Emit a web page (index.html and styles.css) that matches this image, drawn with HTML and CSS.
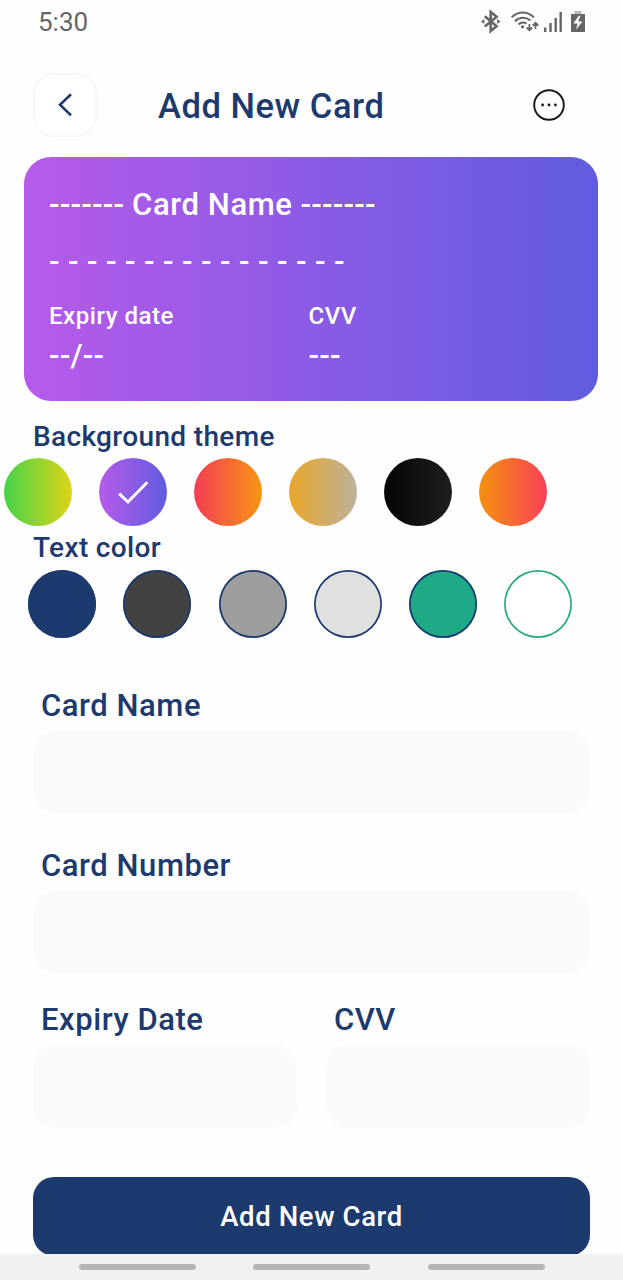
FILE: index.html
```html
<!DOCTYPE html>
<html lang="en">
<head>
<meta charset="utf-8">
<title>Add New Card</title>
<link rel="stylesheet" href="styles.css">
</head>
<body>
<div class="screen">
  <div class="status">
    <span class="clock">5:30</span>
    <svg class="status-icons" width="108" height="26" viewBox="480 9 108 26" fill="none" stroke="#666" stroke-width="2">
      <path d="M484.8 16.2L496.6 26.2L490.7 31V12L496.6 16.8L484.8 26.6" stroke-width="2.6"/>
      <path d="M481 21.5l3.4-2.6v5.2zM500.5 21.5l-3.4-2.6v5.2z" fill="#666" stroke="none"/>
      <path d="M511.6 17.2Q522.5 7.8 534 17.2M514.8 21.2Q522.5 14.7 530.4 20.4M518.5 24.3Q522.5 21.2 526.5 23.6" stroke-width="2.1"/>
      <circle cx="522.6" cy="26.8" r="1.6" fill="#666" stroke="none"/>
      <path d="M529.4 24v6M526.7 27.5l2.7 2.7 2.7-2.7M535.5 29v-6M532.8 25.5l2.7-2.7 2.7 2.7" stroke-width="1.8"/>
      <path d="M545.2 27.5V32M550.5 23V32M555.7 18V32M560.7 12V32" stroke-width="2.4"/>
      <path d="M574.5 11h7v4h-7z" fill="#bbb" stroke="none"/>
      <path d="M571 14h14v18h-14z" fill="#666" stroke="none"/>
      <path d="M578.8 15.8l-5.4 7.6h4l-1.2 6 6.2-8h-4.2l2.2-5.6z" fill="#fff" stroke="none"/>
    </svg>
  </div>

  <header class="header">
    <button class="back" aria-label="Back">
      <svg width="64" height="64" viewBox="0 0 64 64" fill="none" stroke="#1d3a6e" stroke-width="2.6"><path d="M38 21.2L27 31.8L38 42.4"/></svg>
    </button>
    <h1 class="title">Add New Card</h1>
    <svg class="more" width="34" height="34" viewBox="0 0 34 34"><circle cx="17" cy="17" r="14.8" fill="none" stroke="#171717" stroke-width="1.9"/><g fill="#171717"><circle cx="10.6" cy="17" r="1.4"/><circle cx="17" cy="17" r="1.4"/><circle cx="23.4" cy="17" r="1.4"/></g></svg>
  </header>

  <section class="card">
    <div class="card-name">------- <span class="name-text">Card Name</span> -------</div>
    <div class="card-number">- - - - - - - - - - - - - - - -</div>
    <div class="card-row card-labels"><span>Expiry date</span><span>CVV</span></div>
    <div class="card-row card-values"><span>--/--</span><span>---</span></div>
  </section>

  <h2 class="section">Background theme</h2>
  <div class="swatches themes">
    <span class="swatch green"></span>
    <span class="swatch purple"><svg width="68" height="68" viewBox="0 0 68 68" fill="none" stroke="#fff" stroke-width="3"><path d="M20.2 35.6L29 44L48.3 24.2"/></svg></span>
    <span class="swatch red"></span>
    <span class="swatch gold"></span>
    <span class="swatch black"></span>
    <span class="swatch orange"></span>
  </div>
  <h2 class="section">Text color</h2>
  <div class="swatches colors">
    <span class="swatch ring navy"></span>
    <span class="swatch ring charcoal"></span>
    <span class="swatch ring gray"></span>
    <span class="swatch ring silver"></span>
    <span class="swatch ring teal"></span>
    <span class="swatch ring white"></span>
  </div>

  <form class="form">
    <label class="field"><span class="label">Card Name</span><input class="input" type="text"></label>
    <label class="field"><span class="label">Card Number</span><input class="input" type="text"></label>
    <div class="pair">
      <label class="field"><span class="label">Expiry Date</span><input class="input" type="text"></label>
      <label class="field"><span class="label">CVV</span><input class="input" type="text"></label>
    </div>
    <button class="submit" type="button">Add New Card</button>
  </form>

  <nav class="navbar"><span class="pill"></span><span class="pill"></span><span class="pill"></span></nav>
</div>
</body>
</html>
```
FILE: styles.css
```css
* { box-sizing: border-box; }
body { margin: 0; background: #fefefe; font-family: Roboto, "Liberation Sans", sans-serif; font-weight: 500; color: #1d3a6e; }
h1, h2 { margin: 0; font-weight: 500; }
.screen { display: flex; flex-direction: column; width: 623px; height: 1280px; overflow: hidden; }
.status { display: flex; justify-content: space-between; flex: none; height: 73px; padding: 9px 35px 0 38px; }
.clock { font-size: 26px; line-height: 27px; font-weight: 400; color: #666; }
.header { display: flex; align-items: center; flex: none; height: 64px; padding: 0 57.5px 0 33px; }
.back { width: 64px; height: 64px; padding: 0; border: 0; border-radius: 21px; background: #fff; box-shadow: inset 0 0 0 1.6px #f5f5f5; }
.back svg { display: block; }
.title { margin: 1px auto 0 61px; font-size: 34.5px; line-height: 40px; letter-spacing: 0.55px; white-space: nowrap; }
.card { flex: none; height: 244px; margin: 20px 25px 0 24px; padding: 28px 25px 0 25px; border-radius: 27px; background: linear-gradient(90deg, #b75aea, #605ce0); color: #fff; }
.card-name { font-size: 31px; line-height: 40px; letter-spacing: 0.2px; white-space: nowrap; }
.name-text { letter-spacing: 0.6px; }
.card-number { margin-top: 17px; font-size: 31px; line-height: 40px; letter-spacing: 0.38px; white-space: nowrap; }
.card-row { display: grid; grid-template-columns: 259.5px 1fr; }
.card-labels { margin-top: 19px; font-size: 24px; line-height: 30px; letter-spacing: 0.55px; }
.card-values { margin-top: 5px; font-size: 31px; line-height: 40px; letter-spacing: 0.2px; }
.section { flex: none; height: 57px; padding: 19px 0 0 33px; font-size: 28px; line-height: 34px; letter-spacing: 0.35px; }
.swatches { display: flex; flex: none; gap: 27.1px; height: 68px; }
.themes { padding-left: 4px; }
.themes + .section { height: 44px; padding-top: 5px; }
.colors { gap: 27.3px; padding-left: 28px; }
.swatch { flex: none; width: 68px; height: 68px; border-radius: 50%; }
.swatch svg { display: block; }
.green { background: linear-gradient(90deg, #45d34b, #dfd316); }
.purple { background: linear-gradient(90deg, #b75aea, #605ce0); }
.red { background: linear-gradient(90deg, #f23d55, #f99512); }
.gold { background: linear-gradient(90deg, #eba62a, #bbb29c); }
.black { background: linear-gradient(90deg, #050505, #1e1e21); }
.orange { background: linear-gradient(90deg, #f4920f, #fa4059); }
.ring { box-shadow: inset 0 0 0 1.7px #1d3a6e; }
.navy { background: #1d3a6e; }
.charcoal { background: #424242; }
.gray { background: #9e9e9e; }
.silver { background: #e0e0e0; }
.teal { background: #1eaa87; }
.white { background: #fff; box-shadow: inset 0 0 0 1.7px #2aa882; }
.form { display: flex; flex-direction: column; flex: none; height: 616px; padding: 47px 33px 0; }
.field { display: flex; flex-direction: column; flex: none; height: 160px; }
.label { flex: none; height: 46px; padding-left: 8px; font-size: 31px; line-height: 41px; letter-spacing: 0.55px; }
.input { flex: none; width: 100%; height: 82px; padding: 0 20px; border: 0; border-radius: 22px; outline: 0; background: #fafafa; font: inherit; }
.pair { display: grid; flex: none; grid-template-columns: 1fr 1fr; gap: 29px; margin-top: -5px; }
.pair .label { height: 45px; line-height: 39px; }
.pair .field { height: 177px; }
.pair .input { height: 83px; }
.submit { flex: none; height: 79px; padding: 0; border: 0; border-radius: 21px; background: #1d3a6e; color: #fff; font: 500 27.5px/32px Roboto, "Liberation Sans", sans-serif; letter-spacing: 0.6px; }
.navbar { position: relative; display: flex; flex: none; justify-content: center; gap: 57.5px; height: 26px; padding-top: 10px; background: #f1f1f1; }
.pill { width: 117px; height: 6px; border-radius: 3px; background: #b5b5b5; }
```
